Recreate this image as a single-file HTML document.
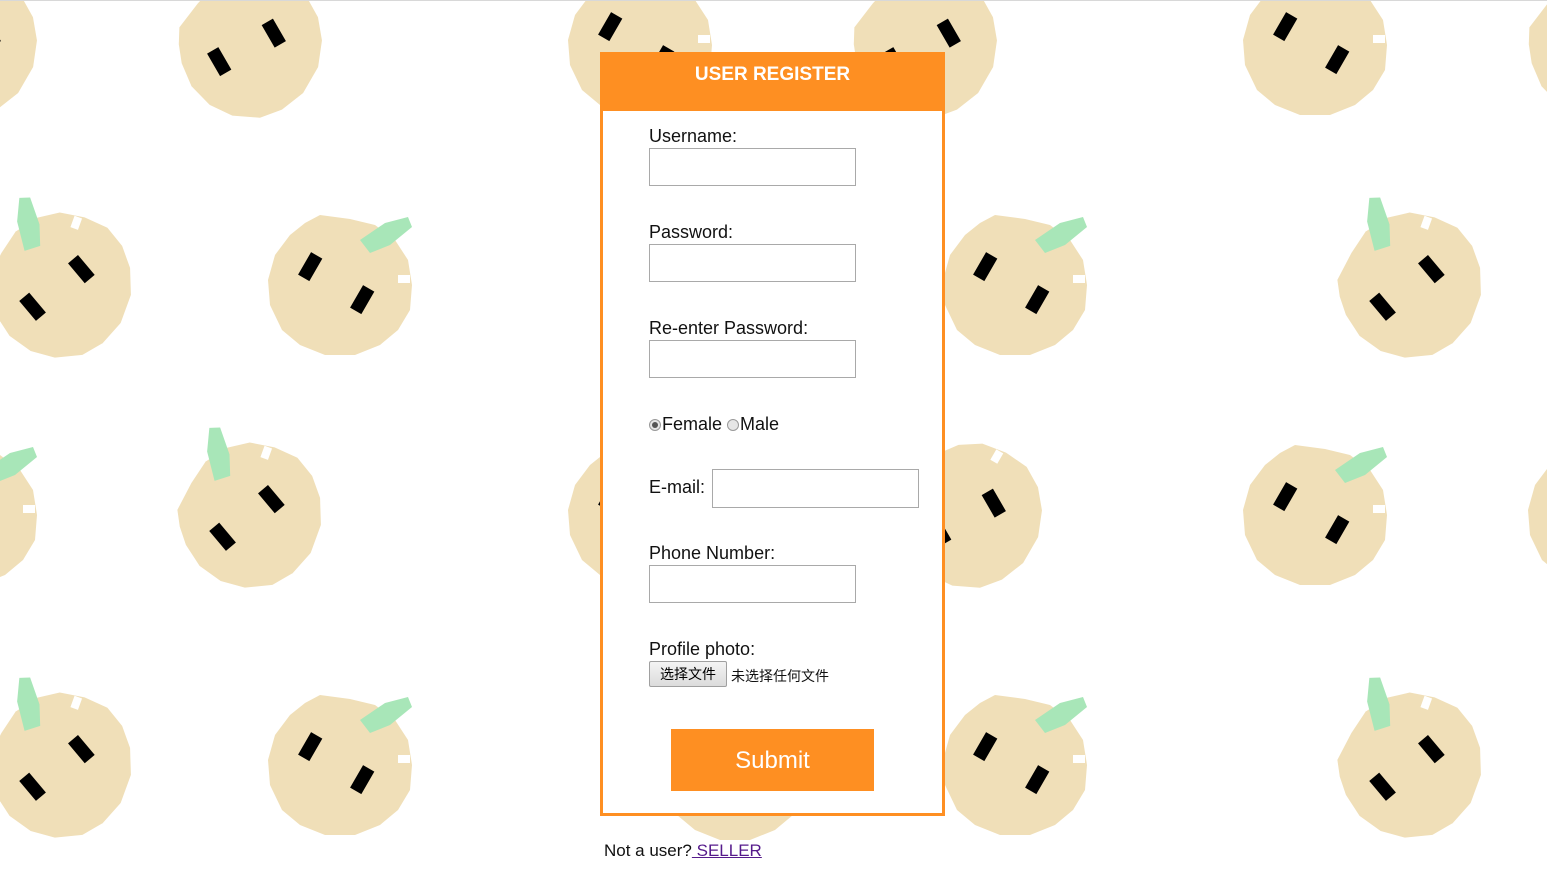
<!DOCTYPE html>
<html><head><meta charset="utf-8"><style>
html,body{margin:0;padding:0;width:1547px;height:882px;overflow:hidden;background:#fff;font-family:"Segoe UI","Liberation Sans","Noto Sans CJK SC",sans-serif;}
#bg{position:absolute;left:0;top:0;}
.topline{position:absolute;left:0;top:0;width:1547px;height:1px;background:#d8d8d8;}
.box{position:absolute;left:600px;top:52px;width:339px;height:761px;border:3px solid #fe8f22;border-top:none;background:#fff;}
.hd{position:absolute;left:0;top:0;width:339px;height:59px;background:#fe8f22;color:#fff;font-weight:bold;font-size:19px;text-align:center;line-height:46px;}
.lbl{position:absolute;left:46px;font-size:18px;color:#111;}
.inp{position:absolute;left:46px;width:205px;height:36px;border:1px solid #a9a9a9;background:#fff;}
.btn{position:absolute;left:68px;top:677px;width:203px;height:62px;background:#fe8f22;color:#fff;font-size:24px;text-align:center;line-height:64px;}
.radio{display:inline-block;width:12px;height:12px;border:1px solid #999;border-radius:50%;background:#e6e6e6;vertical-align:-1px;box-sizing:border-box;position:relative;margin-right:1px;}
.radio.on::after{content:"";position:absolute;left:2px;top:2px;width:6px;height:6px;border-radius:50%;background:#555;}
.file{position:absolute;left:46px;top:609px;width:78px;height:26px;border:1px solid #a0a0a0;background:linear-gradient(#f4f4f4,#dcdcdc);font-size:14px;line-height:25px;text-align:center;box-sizing:border-box;border-radius:2px;}
.foot{position:absolute;left:604px;top:841px;font-size:17px;color:#111;}
.foot a{color:#551a8b;text-decoration:underline;}
</style></head><body>
<svg id="bg" width="1547" height="882" xmlns="http://www.w3.org/2000/svg">
<defs>
<g id="b">
<polygon fill="#f0dfb8" points="-20,-70 10,-66 35,-60 55,-45 68,-25 72,0 70,25 58,45 40,60 15,70 -15,70 -40,60 -58,45 -70,20 -72,-5 -65,-30 -50,-50 -35,-62"/>
<rect x="-8" y="-16" width="13" height="26" fill="#000" transform="translate(-30,-15) rotate(30)"/>
<rect x="-8" y="-16" width="13" height="26" fill="#000" transform="translate(22,18) rotate(30)"/>
<rect x="20" y="-10" width="12" height="8" fill="#fff" transform="translate(38,0)"/>
</g>
<g id="c">
<use href="#b"/>
<polygon fill="#a8e6b8" points="20,-45 45,-62 68,-68 72,-58 50,-40 30,-32"/>
</g>
</defs>
<g>
<use href="#b" transform="translate(-35,45) rotate(-60)"/>
<use href="#b" transform="translate(250,45) rotate(-60)"/>
<use href="#b" transform="translate(640,45)"/>
<use href="#b" transform="translate(925,45) rotate(-60)"/>
<use href="#b" transform="translate(1315,45)"/>
<use href="#b" transform="translate(1600,45) rotate(-60)"/>
<use href="#c" transform="translate(60,285) rotate(-70)"/>
<use href="#c" transform="translate(340,285)"/>
<use href="#c" transform="translate(1015,285)"/>
<use href="#c" transform="translate(1410,285) rotate(-70)"/>
<use href="#c" transform="translate(-35,515)"/>
<use href="#c" transform="translate(250,515) rotate(-70)"/>
<use href="#b" transform="translate(640,515)"/>
<use href="#b" transform="translate(970,515) rotate(-60)"/>
<use href="#c" transform="translate(1315,515)"/>
<use href="#c" transform="translate(1600,515)"/>
<use href="#c" transform="translate(60,765) rotate(-70)"/>
<use href="#c" transform="translate(340,765)"/>
<use href="#b" transform="translate(735,770)"/>
<use href="#c" transform="translate(1015,765)"/>
<use href="#c" transform="translate(1410,765) rotate(-70)"/>
</g>
</svg>
<div class="topline"></div>
<div class="box">
<div class="hd">USER REGISTER</div>
<div class="lbl" style="top:74px">Username:</div>
<div class="inp" style="top:96px"></div>
<div class="lbl" style="top:170px">Password:</div>
<div class="inp" style="top:192px"></div>
<div class="lbl" style="top:266px">Re-enter Password:</div>
<div class="inp" style="top:288px"></div>
<div class="lbl" style="top:362px"><span class="radio on"></span>Female <span class="radio"></span>Male</div>
<div class="lbl" style="top:425px">E-mail:</div>
<div class="inp" style="top:417px;left:109px;height:37px"></div>
<div class="lbl" style="top:491px">Phone Number:</div>
<div class="inp" style="top:513px"></div>
<div class="lbl" style="top:587px">Profile photo:</div>
<div class="file">选择文件</div>
<div style="position:absolute;left:128px;top:614px;font-size:14px;color:#111">未选择任何文件</div>
<div class="btn">Submit</div>
</div>
<div class="foot">Not a user?<a> SELLER</a></div>
</body></html>
